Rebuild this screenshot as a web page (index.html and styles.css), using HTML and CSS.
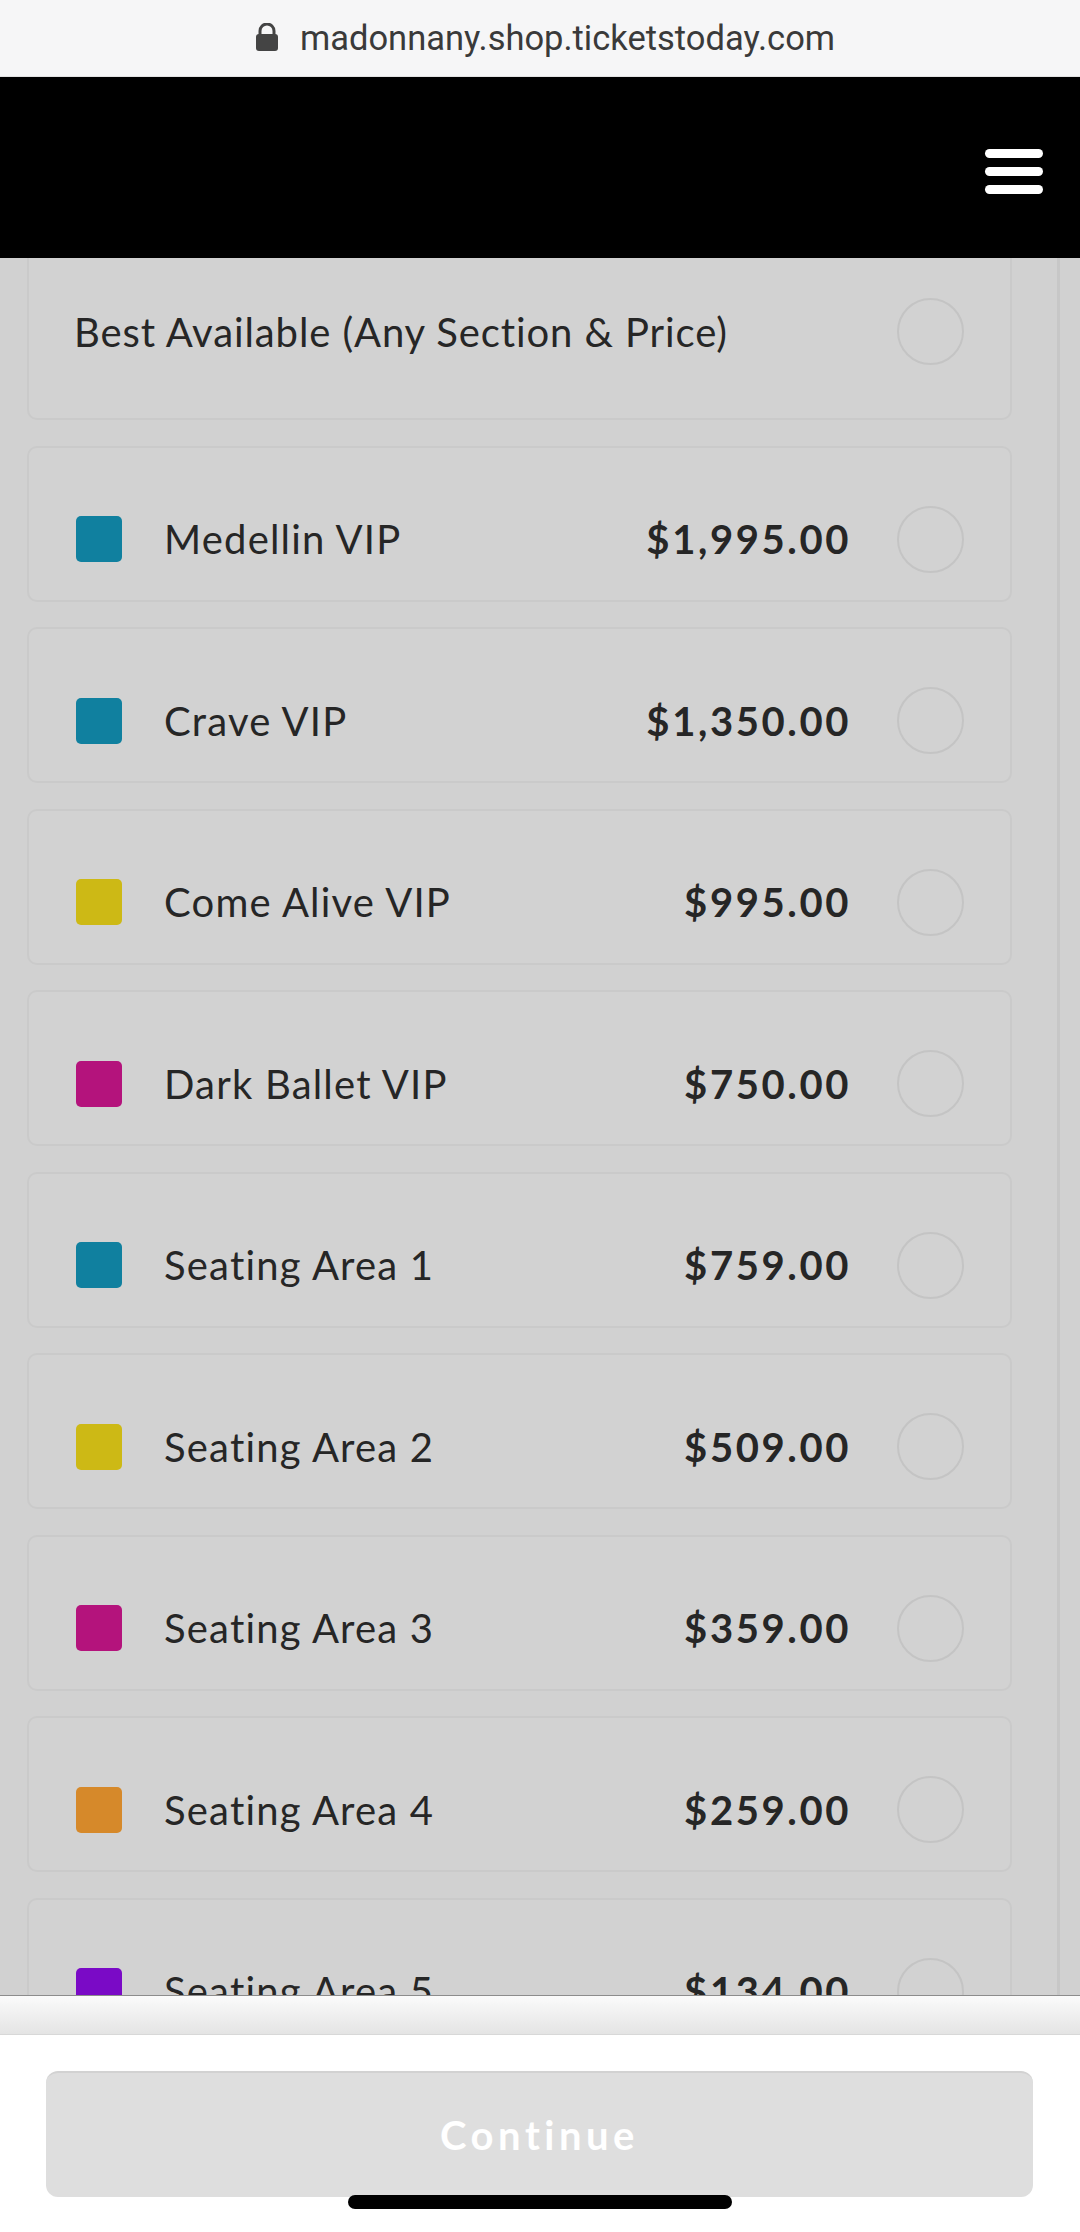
FILE: index.html
```html
<!DOCTYPE html>
<html lang="en">
<head>
    <meta charset="UTF-8">
    <title>Select Tickets</title>
    <link rel="stylesheet" href="styles.css">
</head>
<body>
<div class="screen">
    <div class="urlbar">
        <svg class="lock" width="24" height="28" viewBox="0 0 24 28">
            <path d="M5 12V8a7 7 0 0 1 14 0v4" fill="none" stroke="#444" stroke-width="3"/>
            <rect x="1" y="11" width="22" height="17" rx="3" fill="#444"/>
        </svg>
        <span class="url">madonnany.shop.ticketstoday.com</span>
    </div>

    <header class="topbar">
        <button class="menu" aria-label="Menu">
            <span></span><span></span><span></span>
        </button>
    </header>

    <main class="content">
        <div class="list">
            <label class="option first">
                <span class="name">Best Available (Any Section &amp; Price)</span>
                <span class="radio"></span>
            </label>
            <label class="option">
                <span class="swatch teal"></span>
                <span class="name">Medellin VIP</span>
                <span class="price">$1,995.00</span>
                <span class="radio"></span>
            </label>
            <label class="option">
                <span class="swatch teal"></span>
                <span class="name">Crave VIP</span>
                <span class="price">$1,350.00</span>
                <span class="radio"></span>
            </label>
            <label class="option">
                <span class="swatch yellow"></span>
                <span class="name">Come Alive VIP</span>
                <span class="price">$995.00</span>
                <span class="radio"></span>
            </label>
            <label class="option">
                <span class="swatch magenta"></span>
                <span class="name">Dark Ballet VIP</span>
                <span class="price">$750.00</span>
                <span class="radio"></span>
            </label>
            <label class="option">
                <span class="swatch teal"></span>
                <span class="name">Seating Area 1</span>
                <span class="price">$759.00</span>
                <span class="radio"></span>
            </label>
            <label class="option">
                <span class="swatch yellow"></span>
                <span class="name">Seating Area 2</span>
                <span class="price">$509.00</span>
                <span class="radio"></span>
            </label>
            <label class="option">
                <span class="swatch magenta"></span>
                <span class="name">Seating Area 3</span>
                <span class="price">$359.00</span>
                <span class="radio"></span>
            </label>
            <label class="option">
                <span class="swatch orange"></span>
                <span class="name">Seating Area 4</span>
                <span class="price">$259.00</span>
                <span class="radio"></span>
            </label>
            <label class="option">
                <span class="swatch purple"></span>
                <span class="name">Seating Area 5</span>
                <span class="price">$134.00</span>
                <span class="radio"></span>
            </label>
        </div>
        <div class="rail"></div>
    </main>

    <div class="sheet-edge"></div>

    <footer class="actions">
        <button class="continue" disabled>Continue</button>
        <span class="home-bar"></span>
    </footer>
</div>
</body>
</html>
```

FILE: styles.css
```css
* {
    box-sizing: border-box;
}

body {
    margin: 0;
    font-family: 'Lato', 'Open Sans', sans-serif;
    background: #fff;
}

.screen {
    position: relative;
    display: flex;
    flex-direction: column;
    width: 1080px;
    height: 2232px;
    overflow: hidden;
}

/* browser address bar */
.urlbar {
    height: 77px;
    display: flex;
    align-items: center;
    justify-content: center;
    gap: 21px;
    padding-left: 10px;
    background: #f6f6f7;
    border-bottom: 1px solid #e2e2e2;
}

.lock {
    margin-top: -2px;
}

.url {
    font-family: 'Roboto', sans-serif;
    font-size: 34.5px;
    color: #3a3a3a;
}

.topbar {
    height: 181px;
    flex-shrink: 0;
    display: flex;
    align-items: center;
    justify-content: flex-end;
    padding: 8px 37px 0 0;
    background: #000;
}

.menu {
    display: flex;
    flex-direction: column;
    gap: 9px;
    padding: 0;
    border: none;
    background: none;
}

.menu span {
    display: block;
    width: 58px;
    height: 9px;
    border-radius: 5px;
    background: #fff;
}

/* dimmed list of price levels */
.content {
    flex: 1;
    display: flex;
    padding-left: 27px;
    overflow: hidden;
    background: #d1d1d1;
}

.list {
    width: 985px;
    margin-top: -20px;
    display: flex;
    flex-direction: column;
    gap: 25.5px;
}

.rail {
    width: 3px;
    margin-left: 45px;
    background: #c7c7c7;
}

.option {
    flex-shrink: 0;
    display: flex;
    align-items: center;
    height: 156px;
    padding: 60px 46px 29px 47px;
    border: 2px solid #cacaca;
    border-radius: 10px;
    background: #d2d2d2;
    color: #262626;
}

.option.first {
    height: 182px;
    padding-bottom: 55px;
}

.swatch {
    width: 46px;
    height: 46px;
    margin-right: 42px;
    border-radius: 5px;
}

.teal { background: #10809f; }
.yellow { background: #cdb915; }
.magenta { background: #b4137c; }
.orange { background: #d6892a; }
.purple { background: #7a0ac6; }

.name {
    flex: 1;
    font-size: 40px;
    letter-spacing: 1.2px;
}

.first .name {
    margin-left: -2px;
    letter-spacing: 0.9px;
}

.price {
    font-size: 40px;
    font-weight: 700;
    letter-spacing: 2.6px;
}

.radio {
    width: 67px;
    height: 67px;
    margin-left: 46px;
    border: 2px solid #c4c4c4;
    border-radius: 50%;
}

/* bottom sheet shading */
.sheet-edge {
    height: 40px;
    flex-shrink: 0;
    border-top: 1px solid #8c8c8c;
    border-bottom: 1px solid #d8d8d8;
    background: linear-gradient(#fbfbfb, #e4e4e4);
}

.actions {
    height: 197px;
    flex-shrink: 0;
    padding: 36px 47px 0 46px;
    background: #fff;
}

.continue {
    width: 100%;
    height: 126px;
    border: none;
    border-top: 2px solid #d2d2d2;
    border-radius: 12px;
    background: #dedede;
    color: #fff;
    font-family: 'Lato', sans-serif;
    font-size: 40px;
    font-weight: 700;
    letter-spacing: 4.5px;
}

.home-bar {
    position: absolute;
    left: 348px;
    bottom: 23px;
    width: 384px;
    height: 14px;
    border-radius: 7px;
    background: #000;
}
```
